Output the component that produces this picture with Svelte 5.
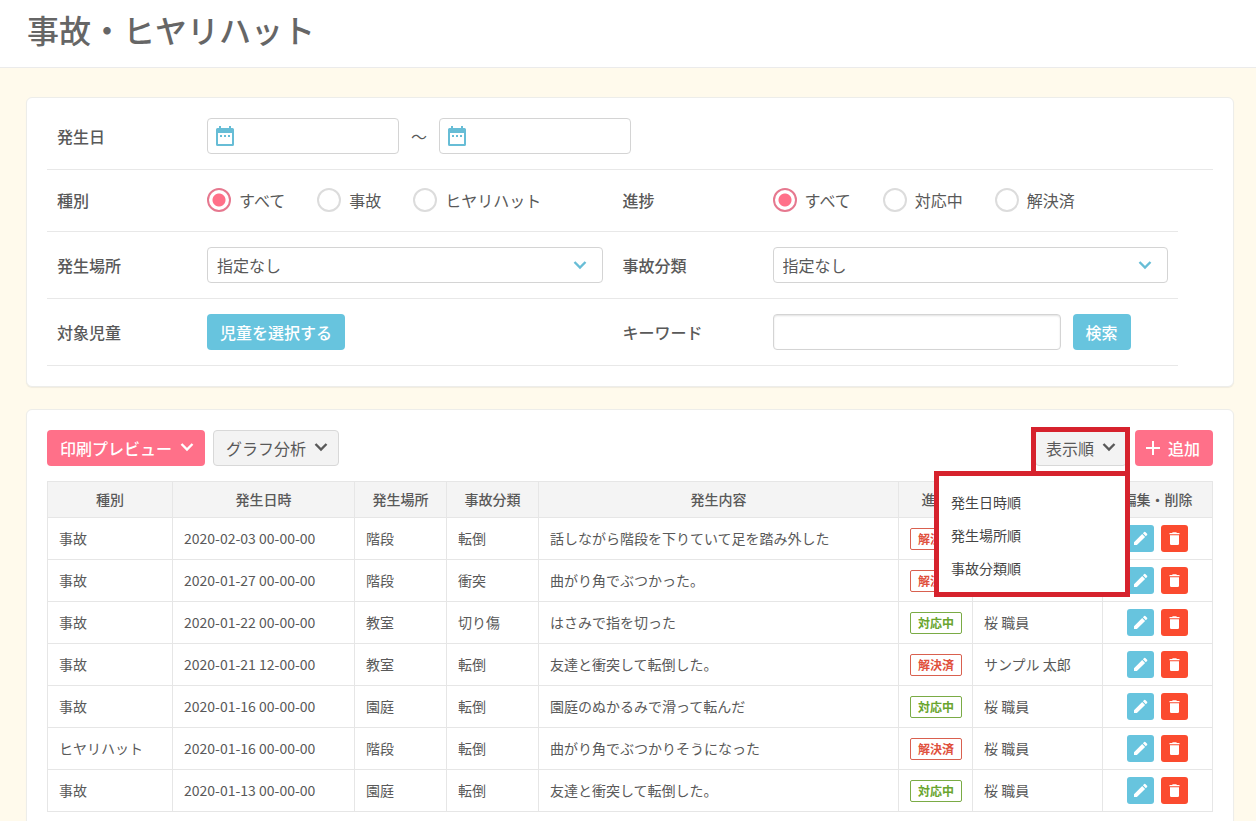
<script>
  const kinds = ['すべて', '事故', 'ヒヤリハット'];
  const states = ['すべて', '対応中', '解決済'];
  const orders = ['発生日時順', '発生場所順', '事故分類順'];
  const heads = ['種別', '発生日時', '発生場所', '事故分類', '発生内容', '進捗', '記入者', '編集・削除'];
  const rows = [
    ['事故', '2020-02-03 00-00-00', '階段', '転倒', '話しながら階段を下りていて足を踏み外した', '解決済', '桜 職員'],
    ['事故', '2020-01-27 00-00-00', '階段', '衝突', '曲がり角でぶつかった。', '解決済', '桜 職員'],
    ['事故', '2020-01-22 00-00-00', '教室', '切り傷', 'はさみで指を切った', '対応中', '桜 職員'],
    ['事故', '2020-01-21 12-00-00', '教室', '転倒', '友達と衝突して転倒した。', '解決済', 'サンプル 太郎'],
    ['事故', '2020-01-16 00-00-00', '園庭', '転倒', '園庭のぬかるみで滑って転んだ', '対応中', '桜 職員'],
    ['ヒヤリハット', '2020-01-16 00-00-00', '階段', '転倒', '曲がり角でぶつかりそうになった', '解決済', '桜 職員'],
    ['事故', '2020-01-13 00-00-00', '園庭', '転倒', '友達と衝突して転倒した。', '対応中', '桜 職員']
  ];
  let kind = $state('すべて');
  let status = $state('すべて');
</script>

{#snippet chevron()}
  <svg class="chevron" viewBox="0 0 14 10" aria-hidden="true"><path d="M1.500 2 7 7.500 12.500 2" /></svg>
{/snippet}

{#snippet dateField(label)}
  <span class="date">
    <svg viewBox="0 0 18 20" aria-hidden="true">
      <path fill-rule="evenodd" d="M3 0h2v2h8V0h2v2h1.500a1.500 1.500 0 0 1 1.500 1.500v15a1.500 1.500 0 0 1-1.500 1.500h-15A1.500 1.500 0 0 1 0 18.500v-15A1.500 1.500 0 0 1 1.500 2H3zM2 7v11h14V7z" />
      <path d="M4 9h2v2H4zM8 9h2v2H8zM12 9h2v2h-2z" />
    </svg>
    <input type="text" aria-label={label} />
  </span>
{/snippet}

<header><h1>事故・ヒヤリハット</h1></header>

<main>
  <form class="card search" onsubmit={(e) => e.preventDefault()}>
    <div class="row">
      <span class="label">発生日</span>
      <div class="control range">
        {@render dateField('発生日（開始）')}
        <span class="tilde">～</span>
        {@render dateField('発生日（終了）')}
      </div>
    </div>
    <div class="row half radios">
      <div class="cell">
        <span class="label">種別</span>
        <div class="control choices">
          {#each kinds as k}
            <label><input type="radio" name="kind" value={k} bind:group={kind} />{k}</label>
          {/each}
        </div>
      </div>
      <div class="cell">
        <span class="label">進捗</span>
        <div class="control choices">
          {#each states as s}
            <label><input type="radio" name="status" value={s} bind:group={status} />{s}</label>
          {/each}
        </div>
      </div>
    </div>
    <div class="row half">
      <div class="cell">
        <label class="label" for="place">発生場所</label>
        <div class="control select">
          <select id="place"><option>指定なし</option></select>
          {@render chevron()}
        </div>
      </div>
      <div class="cell">
        <label class="label" for="category">事故分類</label>
        <div class="control select">
          <select id="category"><option>指定なし</option></select>
          {@render chevron()}
        </div>
      </div>
    </div>
    <div class="row half">
      <div class="cell">
        <span class="label">対象児童</span>
        <div class="control"><button type="button" class="btn blue">児童を選択する</button></div>
      </div>
      <div class="cell">
        <label class="label" for="keyword">キーワード</label>
        <div class="control keyword">
          <input id="keyword" type="text" />
          <button type="submit" class="btn blue">検索</button>
        </div>
      </div>
    </div>
  </form>

  <section class="card list">
    <div class="toolbar">
      <button class="btn pink">印刷プレビュー{@render chevron()}</button>
      <button class="btn gray">グラフ分析{@render chevron()}</button>
      <div class="sort">
        <button class="btn gray" aria-expanded="true">表示順{@render chevron()}</button>
        <ul>
          {#each orders as o}
            <li><a href="#sort">{o}</a></li>
          {/each}
        </ul>
      </div>
      <button class="btn pink add">
        <svg class="plus" viewBox="0 0 14 14" aria-hidden="true"><path d="M7 0v14M0 7h14" /></svg>追加
      </button>
    </div>

    <table>
      <colgroup>
        <col class="c-kind" /><col class="c-time" /><col class="c-short" /><col class="c-short" />
        <col /><col class="c-state" /><col class="c-name" /><col class="c-edit" />
      </colgroup>
      <thead>
        <tr>{#each heads as h}<th scope="col">{h}</th>{/each}</tr>
      </thead>
      <tbody>
        {#each rows as r}
          <tr>
            {#each r.slice(0, 5) as c}<td>{c}</td>{/each}
            <td class="fixed"><span class="badge" class:done={r[5] === '解決済'}>{r[5]}</span></td>
            <td>{r[6]}</td>
            <td class="fixed">
              <div class="actions">
                <button class="icon edit" aria-label="編集">
                  <svg viewBox="0 0 27 27" aria-hidden="true"><path d="M7 17.200 15.200 9l2.900 2.900L9.900 20H7zM15.900 8.300l1.300-1.300a.8.8 0 0 1 1.100 0l1.800 1.800a.8.8 0 0 1 0 1.100L18.800 11.200z" /></svg>
                </button>
                <button class="icon delete" aria-label="削除">
                  <svg viewBox="0 0 27 27" aria-hidden="true"><path d="M8.500 9.200V8H11l.8-.8h3.400L16 8h2.500v1.200zM9 10.200h9v8.500a1.300 1.300 0 0 1-1.300 1.300h-6.400A1.300 1.300 0 0 1 9 18.700z" /></svg>
                </button>
              </div>
            </td>
          </tr>
        {/each}
      </tbody>
    </table>
  </section>
</main>

<style>
  :global(body) {
    margin: 0;
    background: #fffaec;
    color: #595959;
    font: 16px/24px "Noto Sans CJK JP", sans-serif;
  }
  * { box-sizing: border-box; }
  button, input, select { font: inherit; color: inherit; margin: 0; }
  button { cursor: pointer; }

  header {
    height: 68px;
    padding: 5px 27px 0;
    background: #fff;
    border-bottom: 1px solid #ebebeb;
  }
  h1 { margin: 0; font-size: 32px; line-height: 48px; font-weight: 500; color: #666; }

  main { padding: 29px 22px 30px 26px; }
  .card {
    background: #fff;
    border: 1px solid #ededea;
    border-radius: 6px;
    box-shadow: 0 1px 1px rgba(0, 0, 0, 0.06);
  }
  .search { padding: 5px 20px 20px; margin-bottom: 22px; }

  .row {
    display: flex;
    align-items: center;
    padding: 15px 0;
    border-bottom: 1px solid #e8e8e8;
  }
  .half { width: 97%; }
  .radios { padding: 18px 0 19px; }
  .cell { flex: 1 1 0; min-width: 0; display: flex; align-items: center; }
  .label { flex: none; width: 160px; padding-left: 10px; font-weight: 500; }
  .control { flex: 1; min-width: 0; }
  .half .control { margin-right: 10px; }

  .range { display: flex; align-items: center; gap: 12px; }
  .tilde { width: 16px; text-align: center; }
  .date {
    display: flex;
    align-items: center;
    width: 192px;
    height: 36px;
    padding-left: 8px;
    border: 1px solid #d4d4d4;
    border-radius: 4px;
  }
  .date svg { flex: none; width: 18px; height: 20px; fill: #67bdd6; }
  .date input { flex: 1; min-width: 0; border: 0; background: none; outline: none; }

  .choices { display: flex; gap: 32px; }
  .choices label { display: flex; align-items: center; gap: 8px; line-height: 22px; padding-bottom: 0; white-space: nowrap; }
  input[type='radio'] {
    appearance: none;
    width: 24px;
    height: 24px;
    border: 2px solid #dcdcdc;
    border-radius: 50%;
    background: #fff;
  }
  input[type='radio']:checked {
    border-color: #e6788f;
    background: radial-gradient(circle, #ff7089 0 6px, #fff 7px);
  }

  .select { display: grid; align-items: center; }
  .select > :global(*) { grid-area: 1 / 1; }
  select {
    appearance: none;
    width: 100%;
    height: 36px;
    padding: 0 9px;
    border: 1px solid #d4d4d4;
    border-radius: 4px;
    background: #fff;
  }
  .select .chevron { justify-self: end; margin-right: 16px; stroke: #67bdd6; pointer-events: none; }
  .chevron {
    width: 14px;
    height: 10px;
    fill: none;
    stroke: currentColor;
    stroke-width: 2.4;
  }

  .keyword { display: flex; gap: 12px; }
  .keyword input {
    width: 288px;
    height: 36px;
    padding: 0 10px;
    border: 1px solid #d4d4d4;
    border-radius: 4px;
    box-shadow: inset 0 1px 2px rgba(0, 0, 0, 0.12);
  }

  .btn {
    display: flex;
    align-items: center;
    gap: 8px;
    height: 36px;
    padding: 0 12px;
    border: 1px solid transparent;
    border-radius: 4px;
    white-space: nowrap;
  }
  .btn .chevron { margin: 0 -2px 2px 0; }
  .blue { background: #67c4de; color: #fff; font-weight: 500; }
  .pink { background: #ff7089; color: #fff; font-weight: 500; }
  .gray { background: #f3f3f3; border-color: #d8d8d8; }

  .list { padding: 20px; }
  .toolbar { display: flex; gap: 8px; margin-bottom: 15px; }
  .add { padding: 0 12px 0 10px; }
  .plus { width: 14px; height: 14px; stroke: #fff; stroke-width: 2; }

  .sort { position: relative; margin-left: auto; }
  .sort .btn { padding-left: 10px; padding-right: 12px; }
  .sort::before {
    content: '';
    position: absolute;
    inset: -3px -3px -10px -4px;
    border: 5px solid #d6222d;
    pointer-events: none;
  }
  .sort ul {
    position: absolute;
    z-index: 1;
    top: 41px;
    right: -3px;
    width: 196px;
    margin: 0;
    padding: 10px 12px 7px;
    list-style: none;
    background: #fff;
    border: 5px solid #d6222d;
  }
  .sort a {
    display: block;
    font-size: 14px;
    line-height: 33px;
    color: #444;
    text-decoration: none;
  }

  table {
    width: 100%;
    border-collapse: collapse;
    table-layout: fixed;
    font-size: 14px;
    line-height: 20px;
  }
  .c-kind { width: 125px; }
  .c-time { width: 182px; }
  .c-short { width: 92px; }
  .c-state { width: 74px; }
  .c-name { width: 130px; }
  .c-edit { width: 110px; }
  th, td { border: 1px solid #e6e6e6; white-space: nowrap; }
  th { height: 36px; padding: 0 0 2px; background: #f4f4f4; font-weight: 500; }
  td { height: 42px; padding: 0 11px 2px; text-align: left; }
  td.fixed { padding-bottom: 0; }

  .badge {
    display: block;
    width: 52px;
    border: 1px solid #7aab45;
    border-radius: 2px;
    color: #6aa52e;
    font-size: 12px;
    font-weight: 700;
    text-align: center;
  }
  .badge.done { border-color: #d9604f; color: #e0503c; }

  .actions { display: flex; justify-content: center; gap: 7px; }
  .icon { width: 27px; height: 27px; padding: 0; border: 0; border-radius: 3px; }
  .icon svg { display: block; width: 27px; height: 27px; fill: #fff; }
  .edit { background: #67c4de; }
  .delete { background: #fb4b2f; }
</style>
